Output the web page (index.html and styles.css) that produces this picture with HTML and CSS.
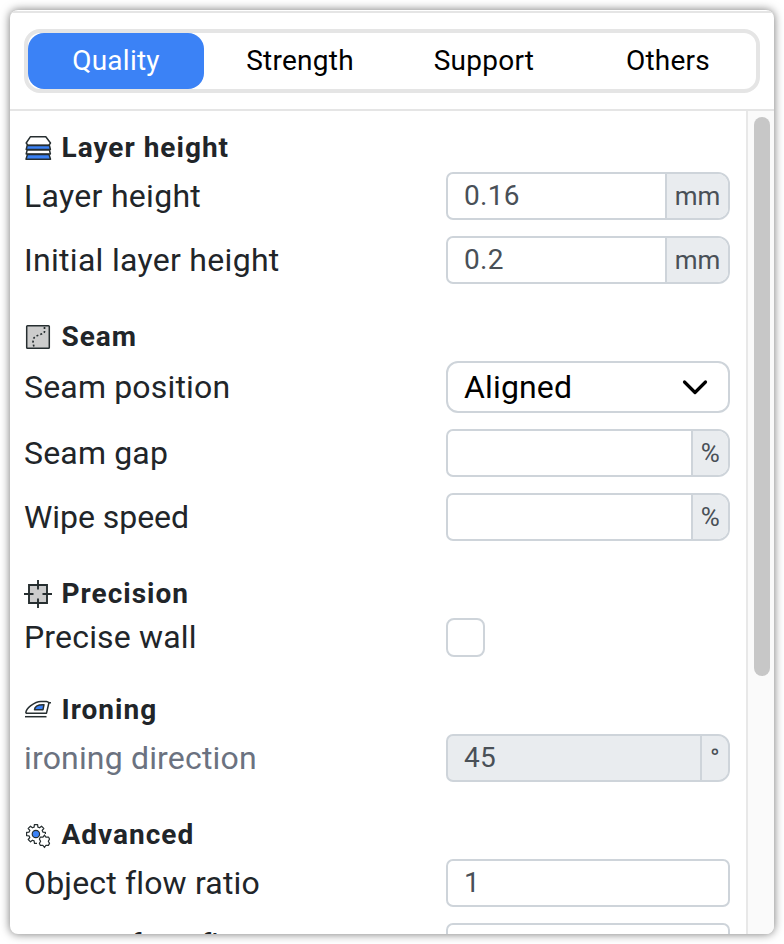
FILE: index.html
```html
<!DOCTYPE html>
<html lang="en">
<head>
<meta charset="utf-8">
<title>Process settings</title>
<link rel="stylesheet" href="styles.css">
</head>
<body>
<main class="panel">
  <nav class="header">
    <div class="tabs">
      <button class="tab active">Quality</button>
      <button class="tab">Strength</button>
      <button class="tab">Support</button>
      <button class="tab">Others</button>
    </div>
  </nav>
  <div class="body">
    <div class="settings">
      <section class="group">
        <h2 class="heading">
          <svg class="icon" viewBox="0 0 28 28" stroke="#262e30" stroke-width="1.500" stroke-linejoin="round"><path fill="#fff" d="M6.500 2.700h15.300l4.700 6.300-1.600 2.200H3.800L2.200 9z"/><path fill="#3b82f6" d="M3.200 11.400h22.200l1 4.100H2.200z"/><path fill="#fff" d="M3.200 15.900h22.200l1 4.100H2.200z"/><path fill="#3b82f6" d="M3.400 20.600h21.700l1.400 4.700H2z"/></svg>
          <span>Layer height</span>
        </h2>
        <div class="row"><span class="label loose">Layer height</span><div class="field"><span class="value">0.16</span><span class="unit mm">mm</span></div></div>
        <div class="row"><span class="label loose">Initial layer height</span><div class="field"><span class="value">0.2</span><span class="unit mm">mm</span></div></div>
      </section>
      <section class="group">
        <h2 class="heading">
          <svg class="icon" viewBox="0 0 28 28"><rect x="2.700" y="2.700" width="22.600" height="22.600" rx=".8" fill="#ccc" stroke="#262e30" stroke-width="1.500"/><path d="M20.500 4v4.500c0 3-8 3-10.500 6.500-1.600 2.300-1 6 .5 10" fill="none" stroke="#262e30" stroke-width="1.700" stroke-dasharray="1.900 2.100"/></svg>
          <span>Seam</span>
        </h2>
        <div class="row"><span class="label">Seam position</span><div class="select"><span>Aligned</span><svg class="chevron" viewBox="0 0 28 18"><path d="m3.500 4 10.500 10.500L24.500 4"/></svg></div></div>
        <div class="row"><span class="label">Seam gap</span><div class="field"><span class="value"></span><span class="unit percent">%</span></div></div>
        <div class="row"><span class="label tight">Wipe speed</span><div class="field"><span class="value"></span><span class="unit percent">%</span></div></div>
      </section>
      <section class="group">
        <h2 class="heading">
          <svg class="icon" viewBox="0 0 28 28"><path fill="#ccc" stroke="#262e30" stroke-width="1.900" d="M5 5h18v18H5z"/><path fill="none" stroke="#262e30" stroke-width="1.900" d="M14 0v9.500M14 18.500V28M0 14h9.500M18.500 14H28"/></svg>
          <span>Precision</span>
        </h2>
        <div class="row"><span class="label raised">Precise wall</span><span class="checkbox"></span></div>
      </section>
      <section class="group">
        <h2 class="heading">
          <svg class="icon" viewBox="0 0 28 28" fill="none" stroke="#262e30" stroke-width="1.500" stroke-linejoin="round"><path d="M1.800 17.200h20.700L25 6.500M1.800 17.200c0-3.200 2-5.200 5-7.500 4.500-3.300 6-4.100 10-4.100h5.700c1.500 0 2 1.300 4.500 1.100"/><path fill="#3b82f6" d="M10.500 13.700c.2-3 3.500-5.200 9.500-5l-1 5z"/><path d="M1 20.700h21.500"/></svg>
          <span>Ironing</span>
        </h2>
        <div class="row"><span class="label muted">ironing direction</span><div class="field disabled"><span class="value">45</span><span class="unit degree">°</span></div></div>
      </section>
      <section class="group">
        <h2 class="heading">
          <svg class="icon" viewBox="0 0 28 28" fill="none" stroke="#262e30" stroke-width="1.200" stroke-linejoin="round"><path d="M13 22.400h-2.500l-.4-2.500-1.700-.7-1.900 1.600-2.300-2.300 1.600-1.900-.7-1.700-2.500-.3v-3.200l2.500-.3.700-1.700-1.600-1.900 2.300-2.300 1.900 1.600 1.700-.7.300-2.500h3.200l.3 2.500 1.700.7 1.900-1.600 2.300 2.300-1.600 1.900.7 1.700 2.500.3V13"/><circle cx="11.900" cy="13" r="3.700" fill="#3b82f6"/><path d="m20.500 14 1.400 2.200 2.600-.1 1 2-1.200 2.100 1.200 2.200-1.100 2-2.500-.1-1.400 2.200-1.600-2.200-2.500.1-1-2 1.200-2.200-1.200-2.100 1-2 2.600.1z"/></svg>
          <span>Advanced</span>
        </h2>
        <div class="row"><span class="label">Object flow ratio</span><div class="field"><span class="value">1</span></div></div>
        <div class="row"><span class="label raised-more">Top surface flow ratio</span><div class="field"><span class="value">1</span></div></div>
      </section>
    </div>
    <div class="scrollbar"><div class="thumb"></div></div>
  </div>
</main>
</body>
</html>
```
FILE: styles.css
```css
* { box-sizing: border-box; }
body {
  margin: 0;
  padding: 10px;
  height: 944px;
  overflow: hidden;
  background: #fff;
  color: #212529;
  font-family: Roboto, sans-serif;
}
.panel {
  display: flex;
  flex-direction: column;
  height: 924px;
  overflow: hidden;
  border-radius: 8px;
  background: #fff;
  box-shadow: 0 0 10px rgba(0, 0, 0, .55);
  padding-top: 1px;
}
.header {
  flex: none;
  height: 100px;
  padding: 16px 14px;
  border-top: 2px solid #e5e5e5;
  border-bottom: 2px solid #e5e5e5;
}
.tabs {
  display: grid;
  grid-template-columns: repeat(4, 176px);
  gap: 8px;
  width: 736px;
  height: 64px;
  border: 4px solid #e5e5e5;
  border-radius: 16px;
}
.tab {
  padding: 0;
  border: 0;
  border-radius: 16px;
  background: none;
  color: #000;
  font: 28px/32px Roboto, sans-serif;
  letter-spacing: .25px;
}
.tab.active { background: #3b82f6; color: #fff; }
.body { display: flex; flex: 1; min-height: 0; }
.settings { flex: 1; padding: 20px 16px 0 14px; overflow: hidden; }
.group { display: flex; flex-direction: column; gap: 16px; margin-bottom: 36px; }
.heading {
  display: flex;
  align-items: center;
  gap: 9.5px;
  height: 34px;
  margin: 0 0 -9px;
  font-size: 28px;
  line-height: 34px;
  font-weight: 700;
  letter-spacing: 1px;
}
.icon { width: 28px; height: 28px; }
.row { display: grid; grid-template-columns: 422px 284px; align-items: center; }
.label { font-size: 32px; line-height: 38px; letter-spacing: .17px; white-space: nowrap; }
.loose { letter-spacing: .3px; }
.tight { letter-spacing: -.05px; }
.raised { margin-top: -2px; }
.raised-more { margin-top: -4px; letter-spacing: -.1px; }
.muted { color: #6b7280; }
.field {
  display: flex;
  height: 48px;
  overflow: hidden;
  border: 2px solid #ced4da;
  border-radius: 7px;
  color: #495057;
  background: #fff;
  font-size: 28px;
  line-height: 43px;
  letter-spacing: .3px;
}
.field:has(.unit) { border-radius: 7px 12px 12px 7px; }
.value { flex: 1; padding-left: 16px; }
.unit { border-left: 2px solid #ced4da; background: #e9ecef; text-align: center; }
.mm { width: 63px; font-size: 26px; line-height: 45px; letter-spacing: 0; }
.percent { width: 37px; font-size: 26px; line-height: 45px; }
.degree { width: 28px; font-size: 26px; line-height: 45px; }
.disabled { background: #e9ecef; }
.select {
  display: flex;
  align-items: center;
  justify-content: space-between;
  height: 52px;
  padding: 0 19.5px 0 16px;
  border: 2px solid #ced4da;
  border-radius: 12px;
  color: #000;
  font-size: 32px;
  letter-spacing: .15px;
}
.chevron { width: 28px; height: 18px; fill: none; stroke: #000; stroke-width: 3.2; stroke-linecap: round; stroke-linejoin: round; }
.checkbox { width: 39px; height: 39px; border: 2px solid #ced4da; border-radius: 8px; }
.scrollbar { flex: none; width: 28px; padding: 6px 4px 0 6px; border-left: 2px solid #e8e8e8; background: #fafafa; }
.thumb { width: 16px; height: 559px; border-radius: 8px; background: #c7c7c7; }
```
